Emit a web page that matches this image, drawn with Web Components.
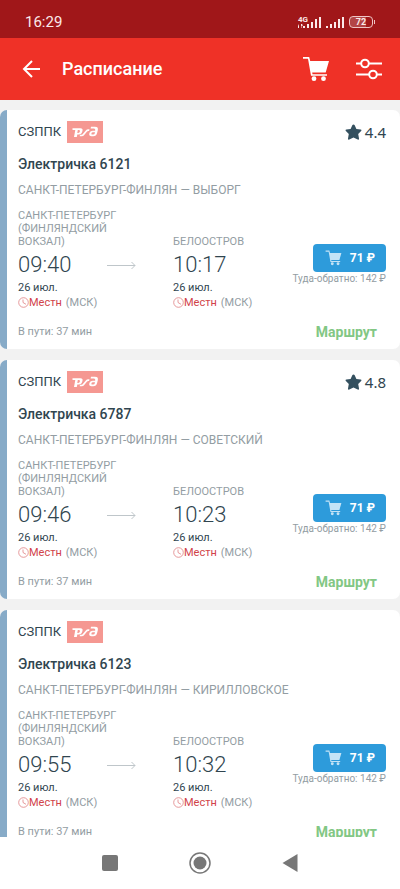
<!DOCTYPE html>
<html lang="ru">
<head>
<meta charset="utf-8">
<meta name="viewport" content="width=device-width, initial-scale=1">
<title>Расписание</title>
<style>
  html, body { height: 100%; margin: 0; }
  body { background: #f2f2f2; color: #30454f; font-family: Roboto, "Noto Sans", sans-serif; }
</style>
</head>
<body>
<schedule-screen></schedule-screen>

<template id="screen-tpl">
  <style>
    :host { display: flex; flex-direction: column; height: 100vh; }
    main { flex: 1; min-height: 0; overflow: hidden; padding-top: 10px; display: flex; flex-direction: column; gap: 11px; }
    train-card { flex: none; }
  </style>
  <status-bar></status-bar>
  <app-bar>Расписание</app-bar>
  <main>
    <train-card rating="4.4" depart="09:40" arrive="10:17">
      <span slot="title">Электричка 6121</span>
      <span slot="route">САНКТ-ПЕТЕРБУРГ-ФИНЛЯН — ВЫБОРГ</span>
    </train-card>
    <train-card rating="4.8" depart="09:46" arrive="10:23">
      <span slot="title">Электричка 6787</span>
      <span slot="route">САНКТ-ПЕТЕРБУРГ-ФИНЛЯН — СОВЕТСКИЙ</span>
    </train-card>
    <train-card depart="09:55" arrive="10:32">
      <span slot="title">Электричка 6123</span>
      <span slot="route">САНКТ-ПЕТЕРБУРГ-ФИНЛЯН — КИРИЛЛОВСКОЕ</span>
    </train-card>
  </main>
  <system-nav></system-nav>
</template>

<template id="status-tpl">
  <style>
    :host { display: flex; align-items: center; justify-content: space-between; flex: none; height: 38px; box-sizing: border-box; padding: 6px 25px 0 25px; background: #a01719; color: #fbe9e9; }
    time { font-size: 15px; line-height: 20px; font-weight: 400; }
    .right { display: flex; align-items: center; gap: 5px; }
    .sim { display: flex; align-items: flex-end; }
    .net { font-size: 8px; line-height: 8px; font-weight: 700; display: flex; flex-direction: column; margin-right: -5px; }
    svg { display: block; fill: currentColor; }
    .battery { display: flex; align-items: center; gap: 1px; }
    .cell { box-sizing: border-box; width: 24px; height: 12px; border: 1px solid #efc4c5; border-radius: 4px; font-size: 9px; line-height: 10px; font-weight: 700; text-align: center; background: linear-gradient(90deg, #b34446 72%, transparent 72%); }
    .tip { width: 1px; height: 4px; background: #efc4c5; }
  </style>
  <time>16:29</time>
  <div class="right">
    <div class="sim">
      <div class="net"><span>4G</span><svg width="6" height="4" viewBox="0 0 6 4"><path d="M1 0v4H0V2zM3 0h1l1 1.500L3.500 2V4H3z"/></svg></div>
      <svg width="18" height="12" viewBox="0 0 18 12"><path d="M0 10h2v2H0zM4 8h2v4H4zM8 6h2v6H8zM12 3h2v9h-2zM16 1h2v11h-2z"/></svg>
    </div>
    <svg width="18" height="12" viewBox="0 0 18 12"><path d="M0 10h2v2H0zM4 8h2v4H4zM8 6h2v6H8zM12 3h2v9h-2zM16 1h2v11h-2z"/></svg>
    <div class="battery"><span class="cell">72</span><span class="tip"></span></div>
  </div>
</template>

<template id="bar-tpl">
  <style>
    :host { display: flex; align-items: center; flex: none; height: 62px; box-sizing: border-box; padding: 0 17px 0 17px; background: #ef3127; color: #fff; }
    button { border: 0; padding: 0; background: none; color: inherit; display: grid; place-items: center; width: 28px; height: 40px; }
    h1 { flex: 1; margin: 0 0 0 17px; font-size: 18px; line-height: 24px; font-weight: 500; }
    .tools { display: flex; gap: 25px; }
    svg { display: block; }
  </style>
  <button type="button" aria-label="Назад"><svg width="18" height="18" viewBox="0 0 18 18" fill="none" stroke="#fff" stroke-width="2"><path d="M18 9H2M10 1 2 9l8 8"/></svg></button>
  <h1><slot></slot></h1>
  <div class="tools">
    <button type="button" aria-label="Корзина"><cart-icon style="--size:28px"></cart-icon></button>
    <button type="button" aria-label="Фильтры"><svg width="26" height="22" viewBox="0 0 26 22" fill="none" stroke="#fff" stroke-width="2"><path d="M0 5.500h5M13 5.500h13M0 16.500h13M21 16.500h5"/><circle cx="9" cy="5.500" r="3.800"/><circle cx="17" cy="16.500" r="3.800"/></svg></button>
  </div>
</template>

<template id="cart-tpl">
  <style>
    :host { display: block; width: var(--size, 17px); }
    svg { display: block; width: 100%; fill: currentColor; }
  </style>
  <svg viewBox="0 0 28 26"><path d="M1 1h6.200l1 4H27l-3.300 11.500H10.200l.3 1.800H25v1.500H9L6 2.700H1z"/><circle cx="12" cy="22.700" r="2.400"/><circle cx="21.500" cy="22.700" r="2.400"/></svg>
</template>

<template id="stop-tpl">
  <style>
    :host { display: block; }
    .name { max-width: 104px; font-size: 11px; line-height: 13px; color: #939da3; }
    .time { display: flex; align-items: center; gap: 36px; font-size: 22px; line-height: 30px; font-weight: 300; margin-top: 2px; }
    .date { font-size: 11px; line-height: 15px; }
    .zone { display: flex; align-items: center; font-size: 11px; line-height: 15px; color: #939da3; }
    .zone b { font-weight: 400; color: #d14349; margin-right: 4px; }
    svg { display: block; fill: none; }
  </style>
  <div class="name"><slot></slot></div>
  <div class="time"><time></time><slot name="after"></slot></div>
  <div class="date">26 июл.</div>
  <div class="zone"><svg width="11" height="11" viewBox="0 0 11 11" stroke="#df8083"><circle cx="5.500" cy="5.500" r="4.800" stroke-width=".8"/><path d="M5 2.500v3l3 1.800" stroke-width=".8"/></svg><b>Местн</b><span>(МСК)</span></div>
</template>

<template id="card-tpl">
  <style>
    :host { display: block; box-sizing: border-box; background: linear-gradient(90deg, #87abc8 7px, #fff 7px); border-radius: 7px; padding: 11px 14px 7px 18px; }
    header, footer { display: flex; align-items: center; justify-content: space-between; }
    .operator, .rating { display: flex; align-items: center; }
    .rating[hidden] { display: none; }
    .operator { gap: 6px; font-size: 13px; line-height: 22px; }
    .rating { gap: 3px; font-size: 15px; line-height: 22px; font-family: "Noto Sans", sans-serif; }
    h2 { margin: 11px 0 0; font-size: 14px; line-height: 20px; font-weight: 500; }
    .route { margin: 6px 0 0; font-size: 12px; line-height: 20px; color: #939da3; }
    .trip { display: grid; grid-template-columns: 155px 1fr auto; align-items: end; margin-top: 9px; }
    .buy { margin-left: -40px; display: flex; flex-direction: column; align-items: flex-end; padding-bottom: 24px; }
    button { display: flex; align-items: center; gap: 8px; height: 28px; border: 0; border-radius: 4px; padding: 0 11px 0 12px; background: #2d9bdb; color: #fff; font: 700 12px/28px Roboto, "Noto Sans", sans-serif; white-space: nowrap; }
    cart-icon { color: #c4e3f6; }
    small { font-size: 10px; line-height: 14px; color: #939da3; white-space: nowrap; }
    footer { margin-top: 12px; font-size: 11px; line-height: 20px; color: #939da3; }
    a { font-size: 14px; font-weight: 700; color: #82c784; text-decoration: none; margin-right: 9px; }
    svg { display: block; }
  </style>
  <header>
    <div class="operator"><span>СЗППК</span>
      <svg width="36" height="22" viewBox="0 0 36 22" role="img" aria-label="РЖД"><path fill="#f59892" d="M0 0h36v22H0z"/><g fill="#fff" fill-rule="evenodd"><path d="M5.500 7.200h8q2.600 0 2 2.600l-.2.800q-.7 2.900-3.600 2.900h-1.400l-.5 2.500H7l1.300-7H5.500zM10.800 8.900l-.5 3h1q1.300 0 1.600-1.400.4-1.600-.9-1.600z"/><path d="M13 13.700h1.700q.6 0 1.100-.6l3-3.600q1-1.200 2.500-1.200h1.200l-.4 1.700h-.8q-.7 0-1.200.6l-2.900 3.500q-1 1.200-2.500 1.200H12.700z"/><path d="M24 5.800h4q3.600 0 2.800 3.400l-.7 2.800q-.8 3.200-4 3.200h-1.500q-2.900 0-2.300-2.700.6-2.800 3.600-2.800h2.300q.4-2.200-1.300-2.200h-3.300zM26 11.200q-1.300 0-1.600 1.200-.2 1.200 1 1.200h.8q1.300 0 1.600-1.400l.2-1z"/></g></svg>
    </div>
    <div class="rating"><svg width="17" height="17" viewBox="0 0 17 17" fill="#34505f"><path d="M8.500.5q.8 0 1.200.8l1.700 3.800 4.200.5q1.500.3.500 1.500l-2.900 3 .8 4.500q.1 1.600-1.300 1L8.500 13.500l-4.200 2.100q-1.400.6-1.300-1l.8-4.500-2.900-3q-1-1.200.5-1.500l4.200-.5 1.700-3.800q.4-.8 1.200-.8z"/></svg><span id="score"></span></div>
  </header>
  <h2><slot name="title"></slot></h2>
  <p class="route"><slot name="route"></slot></p>
  <div class="trip">
    <trip-stop id="from">САНКТ-ПЕТЕРБУРГ (ФИНЛЯНДСКИЙ ВОКЗАЛ)<svg slot="after" width="29" height="8" viewBox="0 0 29 8" fill="none" stroke="#bfc6ca" aria-hidden="true"><path d="M0 4.500h28M24.500 1l3.500 3.500L24.500 8"/></svg></trip-stop>
    <trip-stop id="to">БЕЛООСТРОВ</trip-stop>
    <div class="buy"><button type="button"><cart-icon></cart-icon><span>71 ₽</span></button><small>Туда-обратно: 142 ₽</small></div>
  </div>
  <footer><span>В пути: 37 мин</span><a href="#route">Маршрут</a></footer>
</template>

<template id="nav-tpl">
  <style>
    :host { display: flex; align-items: center; justify-content: center; gap: 66px; flex: none; height: 52px; background: #fff; }
    button { display: grid; place-items: center; width: 24px; height: 24px; padding: 0; border: 0; background: none; }
    svg { display: block; }
  </style>
  <button type="button" aria-label="Недавние"><svg width="16" height="16"><rect width="16" height="16" rx="2" fill="#777"/></svg></button>
  <button type="button" aria-label="Домой"><svg width="22" height="22" viewBox="0 0 22 22"><circle cx="11" cy="11" r="10" fill="none" stroke="#777" stroke-width="1.500"/><circle cx="11" cy="11" r="6.500" fill="#777"/></svg></button>
  <button type="button" aria-label="Назад"><svg width="16" height="18" viewBox="0 0 16 18"><path d="M15.500 0v18L.5 9z" fill="#777"/></svg></button>
</template>

<script>
  class TemplateElement extends HTMLElement {
    constructor() {
      super();
      this.attachShadow({ mode: 'open' }).append(
        document.importNode(document.getElementById(this.constructor.template).content, true));
    }
  }
  class CartIcon extends TemplateElement { static template = 'cart-tpl'; }
  class StatusBar extends TemplateElement { static template = 'status-tpl'; }
  class AppBar extends TemplateElement { static template = 'bar-tpl'; }
  class SystemNav extends TemplateElement { static template = 'nav-tpl'; }
  class TripStop extends TemplateElement {
    static template = 'stop-tpl';
    static observedAttributes = ['time'];
    attributeChangedCallback(name, old, value) { this.shadowRoot.querySelector('time').textContent = value; }
  }
  class TrainCard extends TemplateElement {
    static template = 'card-tpl';
    connectedCallback() {
      const $ = id => this.shadowRoot.getElementById(id);
      this.shadowRoot.querySelector('.rating').hidden = !this.hasAttribute('rating');
      $('score').textContent = this.getAttribute('rating') ?? '';
      $('from').setAttribute('time', this.getAttribute('depart'));
      $('to').setAttribute('time', this.getAttribute('arrive'));
    }
  }
  class ScheduleScreen extends TemplateElement { static template = 'screen-tpl'; }
  customElements.define('cart-icon', CartIcon);
  customElements.define('status-bar', StatusBar);
  customElements.define('app-bar', AppBar);
  customElements.define('system-nav', SystemNav);
  customElements.define('trip-stop', TripStop);
  customElements.define('train-card', TrainCard);
  customElements.define('schedule-screen', ScheduleScreen);
</script>
</body>
</html>
